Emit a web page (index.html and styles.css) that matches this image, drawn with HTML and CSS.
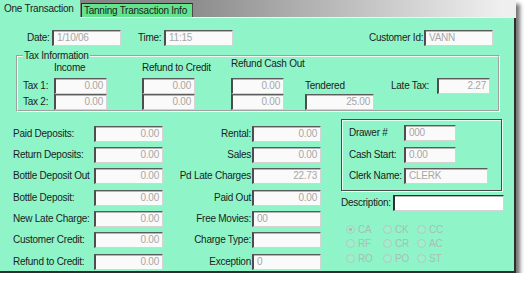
FILE: index.html
```html
<!DOCTYPE html>
<html lang="en">
<head>
    <meta charset="UTF-8">
    <title>One Transaction</title>
    <link rel="stylesheet" href="styles.css">
</head>
<body>
    <div class="window">
        <div class="tabs">
            <div class="tab active">One Transaction</div>
            <div class="tab">Tanning Transaction Info</div>
        </div>

        <div class="panel">
            <div class="head-row">
                <span class="lbl lbl-date">Date:</span>
                <span class="field w69">1/10/06</span>
                <span class="lbl lbl-time">Time:</span>
                <span class="field w69">11:15</span>
                <span class="lbl lbl-cust">Customer Id:</span>
                <span class="field w69">VANN</span>
            </div>

            <fieldset class="tax">
                <legend>Tax Information</legend>
                <div class="tax-grid">
                    <span class="col-head c2">Income</span>
                    <span class="col-head c3">Refund to Credit</span>
                    <span class="col-head c4 raised">Refund Cash Out</span>

                    <span class="lbl r2 c1">Tax 1:</span>
                    <span class="field num w53 r2 c2">0.00</span>
                    <span class="field num w53 r2 c3">0.00</span>
                    <span class="field num w53 r2 c4">0.00</span>
                    <span class="lbl r2 c5">Tendered</span>
                    <span class="lbl r2 c6">Late Tax:</span>
                    <span class="field num w53 r2 c7">2.27</span>

                    <span class="lbl r3 c1">Tax 2:</span>
                    <span class="field num w53 r3 c2">0.00</span>
                    <span class="field num w53 r3 c3">0.00</span>
                    <span class="field num w53 r3 c4">0.00</span>
                    <span class="field num w69 r3 c5">25.00</span>
                </div>
            </fieldset>

            <div class="lower">
                <div class="amounts">
                    <span class="lbl">Paid Deposits:</span><span class="field num w69">0.00</span>
                    <span class="lbl">Return Deposits:</span><span class="field num w69">0.00</span>
                    <span class="lbl">Bottle Deposit Out</span><span class="field num w69">0.00</span>
                    <span class="lbl">Bottle Deposit:</span><span class="field num w69">0.00</span>
                    <span class="lbl">New Late Charge:</span><span class="field num w69">0.00</span>
                    <span class="lbl">Customer Credit:</span><span class="field num w69">0.00</span>
                    <span class="lbl">Refund to Credit:</span><span class="field num w69">0.00</span>
                </div>

                <div class="amounts sales">
                    <span class="lbl">Rental:</span><span class="field num w69">0.00</span>
                    <span class="lbl">Sales</span><span class="field num w69">0.00</span>
                    <span class="lbl">Pd Late Charges</span><span class="field num w69">22.73</span>
                    <span class="lbl">Paid Out</span><span class="field num w69">0.00</span>
                    <span class="lbl">Free Movies:</span><span class="field w69">00</span>
                    <span class="lbl">Charge Type:</span><span class="field w69"></span>
                    <span class="lbl">Exception</span><span class="field w69">0</span>
                </div>

                <div class="side">
                    <div class="drawer">
                        <span class="lbl">Drawer #</span><span class="field w52">000</span>
                        <span class="lbl">Cash Start:</span><span class="field w52">0.00</span>
                        <span class="lbl">Clerk Name:</span><span class="field w84">CLERK</span>
                    </div>

                    <div class="desc-row">
                        <span class="lbl">Description:</span>
                        <span class="field live w111"></span>
                    </div>

                    <div class="tender-types">
                        <span class="radio checked">CA</span>
                        <span class="radio">CK</span>
                        <span class="radio">CC</span>
                        <span class="radio">RF</span>
                        <span class="radio">CR</span>
                        <span class="radio">AC</span>
                        <span class="radio">RO</span>
                        <span class="radio">PO</span>
                        <span class="radio">ST</span>
                    </div>
                </div>
            </div>
        </div>
    </div>
</body>
</html>
```

FILE: styles.css
```css
body {
    margin: 0;
    background: #ffffff;
    font-family: 'Liberation Sans', Arial, sans-serif;
    font-size: 10px;
    letter-spacing: -0.25px;
    color: #1c1c1c;
}

.window {
    width: 516px;
    box-shadow: 4px 4px 4px rgba(0, 0, 0, 0.55);
}

/* tab strip */
.tabs {
    display: flex;
    align-items: flex-end;
    height: 18px;
    background:
        linear-gradient(to top, #f2f2f2 1px, transparent 1px),
        linear-gradient(90deg, #7e7e7e 0%, #8c8c8c 37%, #efefef 97%);
}

.tab {
    box-sizing: border-box;
    white-space: nowrap;
}

.tab.active {
    width: 80px;
    height: 18px;
    padding: 3px 0 0 4px;
    background: #8ff5c9;
}

.tab:not(.active) {
    margin-left: 1px;
    width: 112px;
    height: 14px;
    margin-bottom: 1px;
    padding: 1px 0 0 2px;
    background: #62e38c;
    border-top: 1px solid #2a2a2a;
    border-left: 1px solid #2a2a2a;
    border-right: 1px solid #4a4a4a;
}

/* main panel */
.panel {
    box-sizing: border-box;
    height: 255px;
    background: #8ff5c9;
    border-right: 2px solid #2e2e2e;
    border-bottom: 2px solid #2e2e2e;
    padding-top: 12px;
}

.lbl {
    white-space: nowrap;
    line-height: 12px;
}

.field {
    box-sizing: border-box;
    display: block;
    height: 16px;
    padding: 0 3px;
    line-height: 13px;
    background: #fafafa;
    color: #a6a6a6;
    border-top: 1px solid #5c5c5c;
    border-left: 2px solid #4e4e4e;
    border-right: 1px solid #d4d4d4;
    border-bottom: 1px solid #d4d4d4;
    box-shadow: inset 0 1px 0 #b4b4b4;
    white-space: nowrap;
    overflow: hidden;
}

.field.num { text-align: right; }

.field.live {
    background: #ffffff;
    border-top-color: #303030;
    border-left-color: #303030;
}

.w52 { width: 52px; }
.w53 { width: 53px; }
.w69 { width: 69px; }
.w84 { width: 84px; }
.w111 { width: 111px; }

/* date / time / customer */
.head-row {
    display: flex;
    align-items: center;
    height: 16px;
}

.lbl-date { width: 25px; margin-left: 27px; }
.lbl-time { width: 26px; margin-left: 17px; }
.lbl-cust { width: 55px; margin-left: 136px; }

/* tax group */
.tax {
    box-sizing: border-box;
    width: 484px;
    height: 62px;
    margin: 4px 0 0 16px;
    padding: 0;
    border: 2px groove #f4f4f4;
}

.tax legend {
    margin-left: 5px;
    padding: 0 1px;
    line-height: 12px;
}

.tax-grid {
    display: grid;
    grid-template-columns: 36px 88px 89px 74px 86px 46px 53px;
    grid-template-rows: 16px 16px 16px;
    align-items: center;
}

.tax-grid .r2 { grid-row: 2; }
.tax-grid .r3 { grid-row: 3; }

.tax-grid .c1 { grid-column: 1; padding-left: 5px; }
.tax-grid .c2 { grid-column: 2; }
.tax-grid .c3 { grid-column: 3; }
.tax-grid .c4 { grid-column: 4; }
.tax-grid .c5 { grid-column: 5; }
.tax-grid .c6 { grid-column: 6; }
.tax-grid .c7 { grid-column: 7; }

.col-head {
    grid-row: 1;
    align-self: start;
    white-space: nowrap;
    line-height: 12px;
}

.col-head.raised { margin-top: -4px; }

/* lower area */
.lower {
    display: flex;
    align-items: flex-start;
    margin-top: 7px;
}

.amounts {
    display: grid;
    grid-template-columns: 81px 69px;
    grid-auto-rows: 21.33px;
    align-items: center;
    padding-top: 4px;
    margin-left: 13px;
}

.amounts.sales {
    grid-template-columns: 89px 69px;
    margin-left: 0;
}

.amounts.sales .lbl {
    text-align: right;
    padding-right: 1px;
}

.side {
    margin-left: 20px;
}

.drawer {
    box-sizing: border-box;
    width: 161px;
    height: 72px;
    display: grid;
    grid-template-columns: 55px auto;
    grid-template-rows: repeat(3, 16px);
    row-gap: 5.5px;
    align-items: center;
    padding: 5px 0 0 7px;
    border: 1px solid #4a4a4a;
    box-shadow: inset 1px 1px 0 #e8fff4, 1px 1px 0 #e8fff4;
}

.desc-row {
    display: flex;
    align-items: center;
    margin-top: 4px;
}

.desc-row .lbl { width: 52px; }

.tender-types {
    display: grid;
    grid-template-columns: 37px 34px 34px;
    grid-auto-rows: 14.5px;
    align-items: center;
    margin: 11px 0 0 5px;
}

.radio {
    display: flex;
    align-items: center;
    gap: 3px;
    color: #a9bdb3;
}

.radio::before {
    content: "";
    box-sizing: border-box;
    width: 9px;
    height: 9px;
    border-radius: 50%;
    border: 1px solid #b4c8be;
    background: #98f2ca;
}

.radio.checked::before {
    background: radial-gradient(circle, #a9bdb3 0 1.6px, #98f2ca 2px);
}
```
